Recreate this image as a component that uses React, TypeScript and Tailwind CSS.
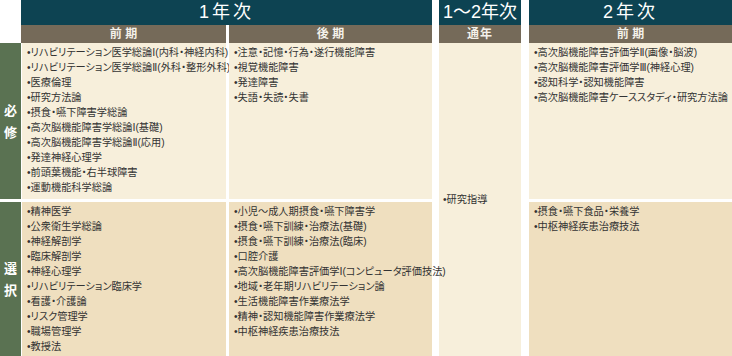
import type { ReactNode } from 'react';

const MUST_1A = [
  'リハビリテーション医学総論Ⅰ(内科・神経内科)',
  'リハビリテーション医学総論Ⅱ(外科・整形外科)',
  '医療倫理',
  '研究方法論',
  '摂食・嚥下障害学総論',
  '高次脳機能障害学総論Ⅰ(基礎)',
  '高次脳機能障害学総論Ⅱ(応用)',
  '発達神経心理学',
  '前頭葉機能・右半球障害',
  '運動機能科学総論',
];
const MUST_1B = ['注意・記憶・行為・遂行機能障害', '視覚機能障害', '発達障害', '失語・失読・失書'];
const MUST_2A = [
  '高次脳機能障害評価学Ⅱ(画像・脳波)',
  '高次脳機能障害評価学Ⅲ(神経心理)',
  '認知科学・認知機能障害',
  '高次脳機能障害ケーススタディ・研究方法論',
];
const ELECT_1A = [
  '精神医学',
  '公衆衛生学総論',
  '神経解剖学',
  '臨床解剖学',
  '神経心理学',
  'リハビリテーション臨床学',
  '看護・介護論',
  'リスク管理学',
  '職場管理学',
  '教授法',
];
const ELECT_1B = [
  '小児〜成人期摂食・嚥下障害学',
  '摂食・嚥下訓練・治療法(基礎)',
  '摂食・嚥下訓練・治療法(臨床)',
  '口腔介護',
  '高次脳機能障害評価学Ⅰ(コンピュータ評価技法)',
  '地域・老年期リハビリテーション論',
  '生活機能障害作業療法学',
  '精神・認知機能障害作業療法学',
  '中枢神経疾患治療技法',
];
const ELECT_2A = ['摂食・嚥下食品・栄養学', '中枢神経疾患治療技法'];

function Items({ items }: { items: string[] }) {
  return (
    <ul className="pl-[5px] pt-[2px]">
      {items.map((s) => (
        <li key={s} className="whitespace-nowrap leading-[15px]">•{s}</li>
      ))}
    </ul>
  );
}

function Label({ children }: { children: ReactNode }) {
  return (
    <div className="bg-[#5a7252] flex flex-col items-center justify-center gap-[5px] text-white font-bold text-[13px] leading-[17px]">
      {children}
    </div>
  );
}

export default function App() {
  return (
    <div
      className="w-[732px] h-[356px] bg-white overflow-hidden text-[10.2px] text-[#333] [font-feature-settings:'palt']"
      style={{ fontFamily: '"Liberation Sans", "DejaVu Sans", "Noto Sans CJK JP", sans-serif' }}
    >
      <div className="grid grid-cols-[21px_1px_204px_3px_203px_7px_82px_8px_203px] grid-rows-[25px_18px_156px_3px_154px]">
        {/* year headers */}
        <div className="row-start-1 col-start-2 col-span-4 bg-[#0d4352] text-white text-[18px] flex items-center justify-center tracking-[3px] [font-feature-settings:normal]">
          1年次
        </div>
        <div className="row-start-1 col-start-7 bg-[#0d4352] text-white text-[18px] flex items-center justify-center [font-feature-settings:normal]">
          1〜2年次
        </div>
        <div className="row-start-1 col-start-9 bg-[#0d4352] text-white text-[18px] flex items-center justify-center tracking-[3px] [font-feature-settings:normal]">
          2年次
        </div>

        {/* term headers */}
        <div className="row-start-2 col-start-2 col-span-2 bg-[#756a59] text-[#f4f1ea] font-bold text-[12px] flex items-center justify-center">
          前 期
        </div>
        <div className="row-start-2 col-start-5 bg-[#756a59] text-[#f4f1ea] font-bold text-[12px] flex items-center justify-center">
          後 期
        </div>
        <div className="row-start-2 col-start-7 bg-[#756a59] text-[#f4f1ea] font-bold text-[12px] flex items-center justify-center tracking-[1px]">
          通年
        </div>
        <div className="row-start-2 col-start-9 bg-[#756a59] text-[#f4f1ea] font-bold text-[12px] flex items-center justify-center">
          前 期
        </div>

        {/* required */}
        <div className="row-start-3 col-start-1 grid">
          <Label>
            <span>必</span>
            <span>修</span>
          </Label>
        </div>
        <div className="row-start-3 col-start-3 bg-[#f7efdb]">
          <Items items={MUST_1A} />
        </div>
        <div className="row-start-3 col-start-5 bg-[#f7efdb]">
          <Items items={MUST_1B} />
        </div>
        <div className="row-start-3 row-span-3 col-start-7 bg-[#f7efdb] flex items-center pl-[4px] leading-[15px]">
          •研究指導
        </div>
        <div className="row-start-3 col-start-9 bg-[#f7efdb]">
          <Items items={MUST_2A} />
        </div>

        {/* elective */}
        <div className="row-start-5 col-start-1 grid">
          <Label>
            <span>選</span>
            <span>択</span>
          </Label>
        </div>
        <div className="row-start-5 col-start-3 bg-[#efdfbf]">
          <Items items={ELECT_1A} />
        </div>
        <div className="row-start-5 col-start-5 bg-[#efdfbf]">
          <Items items={ELECT_1B} />
        </div>
        <div className="row-start-5 col-start-9 bg-[#efdfbf]">
          <Items items={ELECT_2A} />
        </div>
      </div>
    </div>
  );
}
